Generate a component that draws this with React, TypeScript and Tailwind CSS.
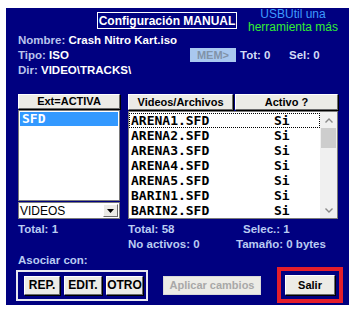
import React from "react";

const files = ["ARENA1.SFD", "ARENA2.SFD", "ARENA3.SFD", "ARENA4.SFD", "ARENA5.SFD", "BARIN1.SFD", "BARIN2.SFD"];

// classic raised button look
const btn =
  "flex items-center justify-center bg-[#ecebe6] text-black border border-t-white border-l-white border-b-[#6b6b6b] border-r-[#6b6b6b] shadow-[1px_1px_0_#000]";

function App() {
  return (
    <div className="w-[358px] h-[315px] bg-white pt-[8px] pl-[6px] font-['Liberation_Sans',Arial,sans-serif] text-[11.5px] font-bold">
      <div className="w-[343px] h-[297px] bg-[#000080] overflow-hidden flex flex-col">
        {/* title row */}
        <div className="flex h-[25px]">
          <div className="ml-[91px] mt-[4px] w-[140px] h-[17px] border border-white text-white text-[12px] flex items-center justify-center">
            Configuración MANUAL
          </div>
          <div className="ml-[11px] flex flex-col items-center font-normal text-[12px] leading-[13px]">
            <span className="text-[#3d9bff]">USBUtil una</span>
            <span className="text-[#33ee33]">herramienta más</span>
          </div>
        </div>

        {/* info lines */}
        <div className="pl-[12px] leading-[14px]">
          <div>
            <span className="text-[#b9c3ec]">Nombre: </span>
            <span className="text-white">Crash Nitro Kart.iso</span>
          </div>
          <div className="flex items-center mt-[1px]">
            <div className="w-[172px]">
              <span className="text-[#b9c3ec]">Tipo: </span>
              <span className="text-white">ISO</span>
            </div>
            <div className="w-[46px] h-[14px] bg-[#a9c8ef] text-[#8193a8] flex items-center justify-center text-[11px]">
              MEM&gt;
            </div>
            <span className="ml-[4px] text-[#d4dcf6] w-[49px]">Tot: 0</span>
            <span className="text-[#d4dcf6]">Sel: 0</span>
          </div>
          <div className="mt-[1px]">
            <span className="text-[#b9c3ec]">Dir: </span>
            <span className="text-white">VIDEO\TRACKS\</span>
          </div>
        </div>

        {/* lists */}
        <div className="flex mt-[17px] pl-[12px] gap-[8px]">
          <div className="w-[102px] flex flex-col">
            <div className={btn + " h-[15px] text-[11px]"}>Ext=ACTIVA</div>
            <div className="mt-[1px] h-[91px] bg-white border border-[#7a7a7a] p-[1px]">
              <div className="h-[14px] bg-[#3399ff] text-white font-['DejaVu_Sans_Mono',monospace] text-[13px] leading-[14px] pl-[2px]">
                SFD
              </div>
            </div>
            <div className="mt-[1px] h-[17px] bg-white border border-[#7a7a7a] flex items-center justify-between font-normal text-[12px] text-black">
              <span className="pl-[1px]">VIDEOS</span>
              <div className="w-[15px] h-[13px] mr-[1px] bg-[#ecebe6] border border-t-white border-l-white border-b-[#6b6b6b] border-r-[#6b6b6b] flex items-center justify-center">
                <svg width="7" height="4" viewBox="0 0 7 4">
                  <path d="M0 0h7L3.5 4z" fill="#000" />
                </svg>
              </div>
            </div>
          </div>

          <div className="w-[210px] flex flex-col">
            <div className="flex gap-[2px]">
              <div className={btn + " w-[105px] h-[16px] text-[11px]"}>Videos/Archivos</div>
              <div className={btn + " w-[103px] h-[16px] text-[11px]"}>Activo ?</div>
            </div>
            <div className="mt-[1px] h-[108px] bg-white border border-[#7a7a7a] flex">
              <div className="flex-1 pt-[1px] font-['DejaVu_Sans_Mono',monospace] text-[13px] leading-[14px] text-black">
                {files.map((f, i) => (
                  <div
                    key={f}
                    className={
                      "flex h-[15px] items-center " + (i === 0 ? "border border-dotted border-black" : "border border-transparent")
                    }
                  >
                    <span className="w-[104px] pl-[1px]">{f}</span>
                    <span className="pl-[40px]">Si</span>
                  </div>
                ))}
              </div>
              <div className="w-[17px] bg-[#f0f0f0] flex flex-col justify-between">
                <div>
                  <div className="h-[16px] flex items-center justify-center">
                    <svg width="8" height="5" viewBox="0 0 8 5">
                      <path d="M0.5 4.5L4 1l3.5 3.5" stroke="#8a8a8a" strokeWidth="1.4" fill="none" />
                    </svg>
                  </div>
                  <div className="mx-[1px] h-[20px] bg-[#cdcdcd]" />
                </div>
                <div className="h-[16px] flex items-center justify-center">
                  <svg width="8" height="5" viewBox="0 0 8 5">
                    <path d="M0.5 0.5L4 4l3.5-3.5" stroke="#8a8a8a" strokeWidth="1.4" fill="none" />
                  </svg>
                </div>
              </div>
            </div>
          </div>
        </div>

        {/* stats */}
        <div className="flex pl-[12px] mt-[3px] leading-[14px] text-[#b9cbf2]">
          <span className="w-[110px]">Total: 1</span>
          <div className="flex flex-col">
            <div className="flex">
              <span className="w-[115px]">Total: 58</span>
              <span>Selec.: 1</span>
            </div>
            <div className="flex mt-[1px]">
              <span className="w-[108px]">No activos: 0</span>
              <span>Tamaño: 0 bytes</span>
            </div>
          </div>
        </div>
        <div className="pl-[12px] mt-[2px] leading-[14px] text-[#b9cbf2]">Asociar con:</div>

        {/* bottom buttons */}
        <div className="flex items-center pl-[10px] h-[36px]">
          <div className="w-[132px] h-[31px] border-2 border-[#e8e8f0] flex items-center pl-[6px] gap-[4px] text-[12px]">
            <div className={btn + " w-[36px] h-[19px]"}>REP.</div>
            <div className={btn + " w-[38px] h-[19px]"}>EDIT.</div>
            <div className={btn + " w-[37px] h-[19px]"}>OTRO</div>
          </div>
          <div className="ml-[15px] w-[98px] h-[19px] bg-[#ecebe6] border border-[#d8d8d8] text-[#a8a8a8] text-[11px] flex items-center justify-center">
            Aplicar cambios
          </div>
          <div className="ml-[16px] w-[66px] h-[36px] border-[4px] border-[#e41e2b] flex items-center justify-center">
            <div className={btn + " w-[50px] h-[20px] text-[11px]"}>Salir</div>
          </div>
        </div>
      </div>
    </div>
  );
}

export default App;
